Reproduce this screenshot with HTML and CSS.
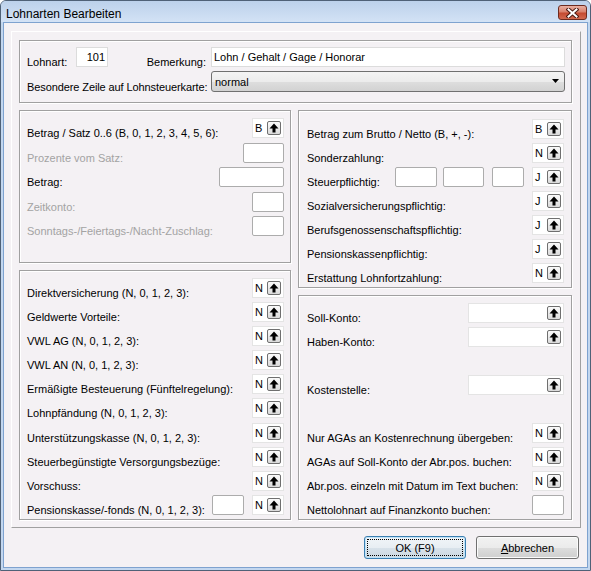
FILE: index.html
```html
<!DOCTYPE html>
<html lang="de">
<head>
<meta charset="utf-8">
<title>Lohnarten Bearbeiten</title>
<link rel="stylesheet" href="styles.css">
</head>
<body>
<div class="window">
  <div class="titlebar">
    <span class="title">Lohnarten Bearbeiten</span>
    <span class="close"><svg width="13" height="10" viewBox="0 0 13 10"><path d="M2.5 1.5 L10.5 8.5 M10.5 1.5 L2.5 8.5" stroke="#4a1a12" stroke-width="4" stroke-linecap="square"/><path d="M2.5 1.5 L10.5 8.5 M10.5 1.5 L2.5 8.5" stroke="#ffffff" stroke-width="2" stroke-linecap="square"/></svg></span>
  </div>
  <div class="client">
    <div class="frame">
      <div class="group topbox">
        <div class="trow">
          <span class="tlbl lohnart">Lohnart:</span>
          <span class="edit num">101</span>
          <span class="tlbl bem">Bemerkung:</span>
          <span class="edit wide">Lohn / Gehalt / Gage / Honorar</span>
        </div>
        <div class="trow combo-row">
          <span class="tlbl narrow">Besondere Zeile auf Lohnsteuerkarte:</span>
          <span class="combo"><span class="ctext">normal</span><svg width="7" height="4" viewBox="0 0 7 4"><path d="M0 0 H7 L3.5 4 Z" fill="#000"/></svg></span>
        </div>
      </div>
      <div class="cols">
        <div class="col">
          <div class="group lt">
            <div class="row"><span class="lbl">Betrag / Satz 0..6 (B, 0, 1, 2, 3, 4, 5, 6):</span><span class="pick"><span class="val">B</span><span class="up"><svg width="12" height="12" viewBox="0 0 12 12"><path d="M6 1.5 L10.5 6.5 L7.5 6.5 L7.5 10.5 L4.5 10.5 L4.5 6.5 L1.5 6.5 Z" fill="#000"/></svg></span></span></div>
            <div class="row"><span class="lbl dis">Prozente vom Satz:</span><span class="box w41"></span></div>
            <div class="row"><span class="lbl">Betrag:</span><span class="box w65"></span></div>
            <div class="row"><span class="lbl dis">Zeitkonto:</span><span class="box w32"></span></div>
            <div class="row"><span class="lbl dis">Sonntags-/Feiertags-/Nacht-Zuschlag:</span><span class="box w32"></span></div>
          </div>
          <div class="group lb">
            <div class="row"><span class="lbl">Direktversicherung (N, 0, 1, 2, 3):</span><span class="pick"><span class="val">N</span><span class="up"><svg width="12" height="12" viewBox="0 0 12 12"><path d="M6 1.5 L10.5 6.5 L7.5 6.5 L7.5 10.5 L4.5 10.5 L4.5 6.5 L1.5 6.5 Z" fill="#000"/></svg></span></span></div>
            <div class="row"><span class="lbl">Geldwerte Vorteile:</span><span class="pick"><span class="val">N</span><span class="up"><svg width="12" height="12" viewBox="0 0 12 12"><path d="M6 1.5 L10.5 6.5 L7.5 6.5 L7.5 10.5 L4.5 10.5 L4.5 6.5 L1.5 6.5 Z" fill="#000"/></svg></span></span></div>
            <div class="row"><span class="lbl">VWL AG (N, 0, 1, 2, 3):</span><span class="pick"><span class="val">N</span><span class="up"><svg width="12" height="12" viewBox="0 0 12 12"><path d="M6 1.5 L10.5 6.5 L7.5 6.5 L7.5 10.5 L4.5 10.5 L4.5 6.5 L1.5 6.5 Z" fill="#000"/></svg></span></span></div>
            <div class="row"><span class="lbl">VWL AN (N, 0, 1, 2, 3):</span><span class="pick"><span class="val">N</span><span class="up"><svg width="12" height="12" viewBox="0 0 12 12"><path d="M6 1.5 L10.5 6.5 L7.5 6.5 L7.5 10.5 L4.5 10.5 L4.5 6.5 L1.5 6.5 Z" fill="#000"/></svg></span></span></div>
            <div class="row"><span class="lbl">Ermäßigte Besteuerung (Fünftelregelung):</span><span class="pick"><span class="val">N</span><span class="up"><svg width="12" height="12" viewBox="0 0 12 12"><path d="M6 1.5 L10.5 6.5 L7.5 6.5 L7.5 10.5 L4.5 10.5 L4.5 6.5 L1.5 6.5 Z" fill="#000"/></svg></span></span></div>
            <div class="row"><span class="lbl">Lohnpfändung (N, 0, 1, 2, 3):</span><span class="pick"><span class="val">N</span><span class="up"><svg width="12" height="12" viewBox="0 0 12 12"><path d="M6 1.5 L10.5 6.5 L7.5 6.5 L7.5 10.5 L4.5 10.5 L4.5 6.5 L1.5 6.5 Z" fill="#000"/></svg></span></span></div>
            <div class="row"><span class="lbl">Unterstützungskasse (N, 0, 1, 2, 3):</span><span class="pick"><span class="val">N</span><span class="up"><svg width="12" height="12" viewBox="0 0 12 12"><path d="M6 1.5 L10.5 6.5 L7.5 6.5 L7.5 10.5 L4.5 10.5 L4.5 6.5 L1.5 6.5 Z" fill="#000"/></svg></span></span></div>
            <div class="row"><span class="lbl">Steuerbegünstigte Versorgungsbezüge:</span><span class="pick"><span class="val">N</span><span class="up"><svg width="12" height="12" viewBox="0 0 12 12"><path d="M6 1.5 L10.5 6.5 L7.5 6.5 L7.5 10.5 L4.5 10.5 L4.5 6.5 L1.5 6.5 Z" fill="#000"/></svg></span></span></div>
            <div class="row"><span class="lbl">Vorschuss:</span><span class="pick"><span class="val">N</span><span class="up"><svg width="12" height="12" viewBox="0 0 12 12"><path d="M6 1.5 L10.5 6.5 L7.5 6.5 L7.5 10.5 L4.5 10.5 L4.5 6.5 L1.5 6.5 Z" fill="#000"/></svg></span></span></div>
            <div class="row"><span class="lbl">Pensionskasse/-fonds (N, 0, 1, 2, 3):</span><span class="box w32 gap8"></span><span class="pick"><span class="val">N</span><span class="up"><svg width="12" height="12" viewBox="0 0 12 12"><path d="M6 1.5 L10.5 6.5 L7.5 6.5 L7.5 10.5 L4.5 10.5 L4.5 6.5 L1.5 6.5 Z" fill="#000"/></svg></span></span></div>
          </div>
        </div>
        <div class="col">
          <div class="group rt">
            <div class="row"><span class="lbl">Betrag zum Brutto / Netto (B, +, -):</span><span class="pick"><span class="val">B</span><span class="up"><svg width="12" height="12" viewBox="0 0 12 12"><path d="M6 1.5 L10.5 6.5 L7.5 6.5 L7.5 10.5 L4.5 10.5 L4.5 6.5 L1.5 6.5 Z" fill="#000"/></svg></span></span></div>
            <div class="row"><span class="lbl">Sonderzahlung:</span><span class="pick"><span class="val">N</span><span class="up"><svg width="12" height="12" viewBox="0 0 12 12"><path d="M6 1.5 L10.5 6.5 L7.5 6.5 L7.5 10.5 L4.5 10.5 L4.5 6.5 L1.5 6.5 Z" fill="#000"/></svg></span></span></div>
            <div class="row"><span class="lbl">Steuerpflichtig:</span><span class="box w42 gap6"></span><span class="box w41 gap8"></span><span class="box w32 gap8"></span><span class="pick"><span class="val">J</span><span class="up"><svg width="12" height="12" viewBox="0 0 12 12"><path d="M6 1.5 L10.5 6.5 L7.5 6.5 L7.5 10.5 L4.5 10.5 L4.5 6.5 L1.5 6.5 Z" fill="#000"/></svg></span></span></div>
            <div class="row"><span class="lbl">Sozialversicherungspflichtig:</span><span class="pick"><span class="val">J</span><span class="up"><svg width="12" height="12" viewBox="0 0 12 12"><path d="M6 1.5 L10.5 6.5 L7.5 6.5 L7.5 10.5 L4.5 10.5 L4.5 6.5 L1.5 6.5 Z" fill="#000"/></svg></span></span></div>
            <div class="row"><span class="lbl">Berufsgenossenschaftspflichtig:</span><span class="pick"><span class="val">J</span><span class="up"><svg width="12" height="12" viewBox="0 0 12 12"><path d="M6 1.5 L10.5 6.5 L7.5 6.5 L7.5 10.5 L4.5 10.5 L4.5 6.5 L1.5 6.5 Z" fill="#000"/></svg></span></span></div>
            <div class="row"><span class="lbl">Pensionskassenpflichtig:</span><span class="pick"><span class="val">J</span><span class="up"><svg width="12" height="12" viewBox="0 0 12 12"><path d="M6 1.5 L10.5 6.5 L7.5 6.5 L7.5 10.5 L4.5 10.5 L4.5 6.5 L1.5 6.5 Z" fill="#000"/></svg></span></span></div>
            <div class="row"><span class="lbl">Erstattung Lohnfortzahlung:</span><span class="pick"><span class="val">N</span><span class="up"><svg width="12" height="12" viewBox="0 0 12 12"><path d="M6 1.5 L10.5 6.5 L7.5 6.5 L7.5 10.5 L4.5 10.5 L4.5 6.5 L1.5 6.5 Z" fill="#000"/></svg></span></span></div>
          </div>
          <div class="group rb">
            <div class="row"><span class="lbl">Soll-Konto:</span><span class="pick konto"><span class="val"></span><span class="up"><svg width="12" height="12" viewBox="0 0 12 12"><path d="M6 1.5 L10.5 6.5 L7.5 6.5 L7.5 10.5 L4.5 10.5 L4.5 6.5 L1.5 6.5 Z" fill="#000"/></svg></span></span></div>
            <div class="row"><span class="lbl">Haben-Konto:</span><span class="pick konto"><span class="val"></span><span class="up"><svg width="12" height="12" viewBox="0 0 12 12"><path d="M6 1.5 L10.5 6.5 L7.5 6.5 L7.5 10.5 L4.5 10.5 L4.5 6.5 L1.5 6.5 Z" fill="#000"/></svg></span></span></div>
            <div class="row"></div>
            <div class="row"><span class="lbl">Kostenstelle:</span><span class="pick konto"><span class="val"></span><span class="up"><svg width="12" height="12" viewBox="0 0 12 12"><path d="M6 1.5 L10.5 6.5 L7.5 6.5 L7.5 10.5 L4.5 10.5 L4.5 6.5 L1.5 6.5 Z" fill="#000"/></svg></span></span></div>
            <div class="row"></div>
            <div class="row"><span class="lbl">Nur AGAs an Kostenrechnung übergeben:</span><span class="pick"><span class="val">N</span><span class="up"><svg width="12" height="12" viewBox="0 0 12 12"><path d="M6 1.5 L10.5 6.5 L7.5 6.5 L7.5 10.5 L4.5 10.5 L4.5 6.5 L1.5 6.5 Z" fill="#000"/></svg></span></span></div>
            <div class="row"><span class="lbl">AGAs auf Soll-Konto der Abr.pos. buchen:</span><span class="pick"><span class="val">N</span><span class="up"><svg width="12" height="12" viewBox="0 0 12 12"><path d="M6 1.5 L10.5 6.5 L7.5 6.5 L7.5 10.5 L4.5 10.5 L4.5 6.5 L1.5 6.5 Z" fill="#000"/></svg></span></span></div>
            <div class="row"><span class="lbl">Abr.pos. einzeln mit Datum im Text buchen:</span><span class="pick"><span class="val">N</span><span class="up"><svg width="12" height="12" viewBox="0 0 12 12"><path d="M6 1.5 L10.5 6.5 L7.5 6.5 L7.5 10.5 L4.5 10.5 L4.5 6.5 L1.5 6.5 Z" fill="#000"/></svg></span></span></div>
            <div class="row"><span class="lbl">Nettolohnart auf Finanzkonto buchen:</span><span class="box w32"></span></div>
          </div>
        </div>
      </div>
    </div>
    <div class="buttons">
      <span class="btn default"><span class="focus">OK (F9)</span></span>
      <span class="btn cancel"><span class="focus nofocus"><u>A</u>bbrechen</span></span>
    </div>
  </div>
</div>
</body>
</html>
```
FILE: styles.css
```css
* { box-sizing: border-box; }
html, body { margin: 0; padding: 0; }
body {
  width: 591px;
  height: 571px;
  overflow: hidden;
  background: #ffffff;
  font-family: "Liberation Sans", Arial, sans-serif;
  font-size: 11px;
  color: #000;
}
.window {
  width: 591px;
  height: 571px;
  border: 1px solid #4f6177;
  border-radius: 6px 6px 0 0;
  background: #c3d7ef;
  display: flex;
  flex-direction: column;
}
.titlebar {
  flex: none;
  height: 21px;
  display: flex;
  justify-content: space-between;
  align-items: flex-start;
  background: linear-gradient(#bcd1eb, #d3e2f5);
  border-radius: 5px 5px 0 0;
}
.title {
  font-size: 12px;
  line-height: 14px;
  padding: 6px 0 0 5px;
  color: #000;
}
.close {
  width: 29px;
  height: 15px;
  margin: 4px 3px 0 0;
  border: 1px solid #6e2b1f;
  border-radius: 3px;
  background: linear-gradient(#eab0a2 0%, #d9816c 45%, #c44a30 55%, #d2694f 100%);
  display: flex;
  align-items: center;
  justify-content: center;
}
.close svg { display: block; }
.client {
  flex: 1;
  margin: 0 2px 2px;
  border: 1px solid #7ea2cf;
  background: #f4f1f4;
  padding: 8px 6px 0 7px;
  display: flex;
  flex-direction: column;
}
.frame {
  height: 497px;
  flex: none;
  border-top: 1px solid #ffffff;
  border-left: 1px solid #ffffff;
  border-right: 1px solid #a0a0a0;
  border-bottom: 1px solid #a0a0a0;
  padding: 8px 8px 7px 7px;
  display: flex;
  flex-direction: column;
}
.group {
  border: 1px solid #a0a0a0;
  box-shadow: 1px 1px 0 #ffffff, inset 1px 1px 0 #ffffff;
}
.topbox {
  height: 63px;
  flex: none;
  margin-bottom: 7px;
  padding: 6px 6px 0 7px;
  display: flex;
  flex-direction: column;
  gap: 4px;
}
.trow {
  height: 20px;
  display: flex;
  align-items: flex-end;
}
.trow.combo-row { height: 21px; }
.tlbl {
  line-height: 12px;
  margin-bottom: -1px;
  white-space: nowrap;
}
.tlbl.narrow { letter-spacing: -0.1px; }
.tlbl.lohnart { width: 49px; flex: none; }
.tlbl.bem { margin-left: auto; margin-right: 5px; }
.combo-row .tlbl { margin-right: auto; }
.edit {
  height: 20px;
  flex: none;
  background: #ffffff;
  border: 1px solid #dcdcdc;
  line-height: 13px;
  padding-top: 3px;
  white-space: nowrap;
}
.edit.num { width: 32px; text-align: right; padding-right: 2px; }
.edit.wide { width: 354px; padding-left: 2px; }
.combo {
  width: 354px;
  height: 21px;
  flex: none;
  border: 1px solid #707070;
  border-radius: 3px;
  background: linear-gradient(#f4f4f4 0%, #ececec 50%, #dedede 51%, #d2d2d2 100%);
  display: flex;
  align-items: flex-start;
  justify-content: space-between;
  padding: 0 5px 0 3px;
}
.ctext { line-height: 13px; padding-top: 4px; }
.combo svg { display: block; margin-top: 7px; }
.cols {
  flex: 1;
  display: grid;
  grid-template-columns: 272px 1fr;
  column-gap: 7px;
}
.col {
  display: flex;
  flex-direction: column;
  gap: 7px;
}
.lt { height: 153px; flex: none; padding: 7px 6px 0 7px; display: flex; flex-direction: column; gap: 4.5px; }
.lb { flex: 1; padding: 7px 6px 0 7px; display: flex; flex-direction: column; gap: 4.1px; }
.rt { height: 178px; flex: none; padding: 8px 7px 0 8px; display: flex; flex-direction: column; gap: 4px; }
.rb { flex: 1; padding: 7px 7px 0 8px; display: flex; flex-direction: column; gap: 4px; }
.row {
  height: 20px;
  flex: none;
  display: flex;
  align-items: flex-end;
}
.lbl {
  line-height: 12px;
  margin-bottom: -1px;
  margin-right: auto;
  white-space: nowrap;
}
.lbl.dis { color: #a3a3a3; }
.pick {
  width: 32px;
  height: 20px;
  flex: none;
  background: #ffffff;
  border: 1px solid #e4e4e4;
  display: flex;
  align-items: center;
  justify-content: space-between;
  padding: 0 2px 0 2px;
}
.pick.konto { width: 96px; }
.val {
  align-self: flex-start;
  line-height: 12px;
  padding-top: 3px;
}
.up {
  width: 14px;
  height: 14px;
  flex: none;
  border: 1px solid #6f6f6f;
  border-radius: 2px;
  background: linear-gradient(#fbfbfb, #dadada);
  display: flex;
  align-items: center;
  justify-content: center;
}
.up svg { display: block; }
.box {
  height: 20px;
  flex: none;
  background: #ffffff;
  border: 1px solid #acacac;
  border-radius: 2px;
}
.w32 { width: 32px; }
.w41 { width: 41px; }
.w42 { width: 42px; }
.w65 { width: 65px; }
.gap6 { margin-right: 6px; }
.gap8 { margin-right: 8px; }
.buttons {
  margin-top: 8px;
  height: 23px;
  flex: none;
  display: flex;
  justify-content: flex-end;
  gap: 10px;
  padding-right: 2px;
}
.btn {
  height: 23px;
  border: 1px solid #707070;
  border-radius: 3px;
  background: linear-gradient(#f2f2f2 0%, #ebebeb 50%, #dddddd 51%, #cfcfcf 100%);
  box-shadow: inset 0 0 0 1px #fbfbfb;
  display: flex;
  padding: 2px;
}
.btn.default {
  width: 102px;
  border-color: #3c7fb1;
  box-shadow: inset 0 0 0 1px #bfe3f8;
  background: linear-gradient(#f1f5f8 0%, #e8eef3 50%, #d8e2ea 51%, #ccd8e1 100%);
}
.btn.cancel { width: 103px; }
.focus {
  flex: 1;
  border: 1px dotted #000;
  display: flex;
  align-items: center;
  justify-content: center;
  line-height: 13px;
  padding-top: 1px;
}
.focus.nofocus { border-color: transparent; }
```
